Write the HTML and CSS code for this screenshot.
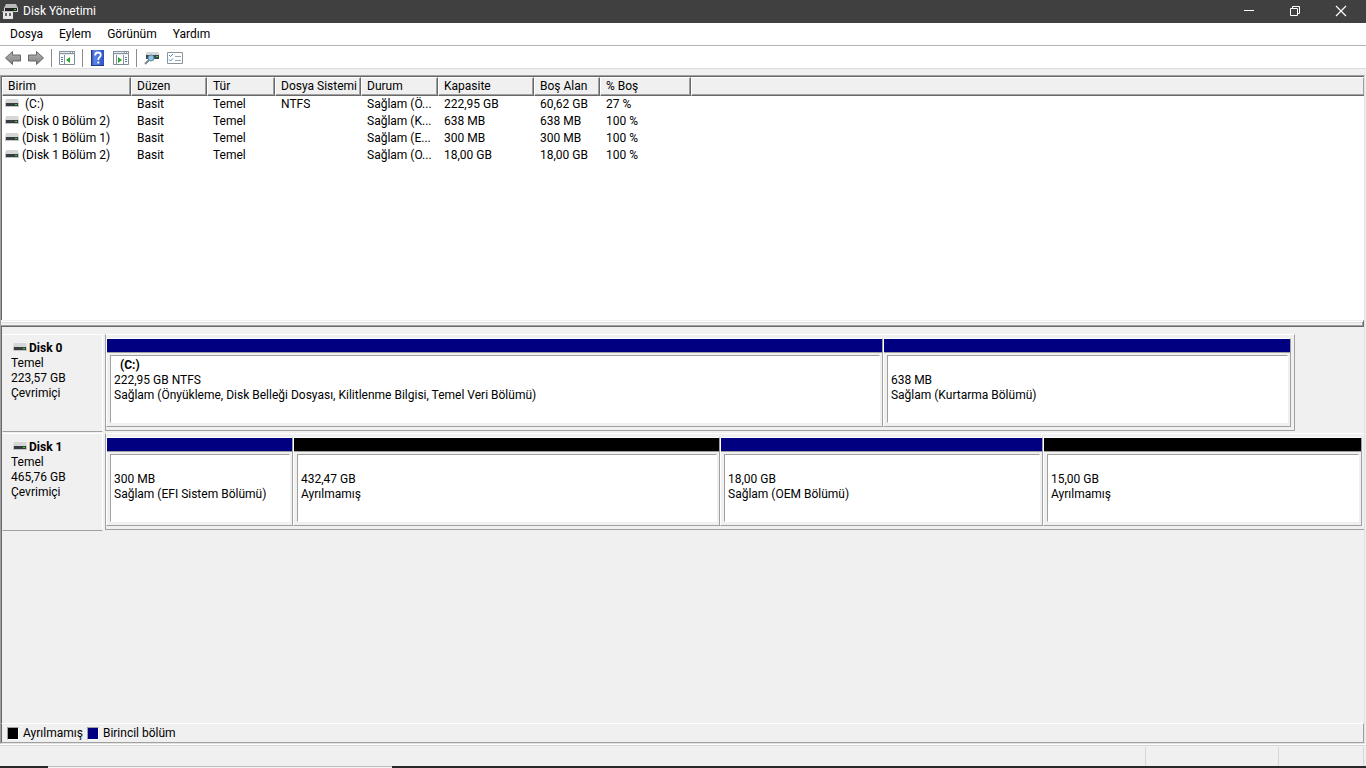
FILE: index.html
```
<!DOCTYPE html>
<html lang="tr">
<head>
<meta charset="utf-8">
<title>Disk Yönetimi</title>
<link rel="stylesheet" href="styles.css">
</head>
<body>
<svg class="defs" aria-hidden="true">
  <defs>
    <linearGradient id="arrowFill" x1="0" y1="0" x2="0" y2="1"><stop offset="0" stop-color="#b4b4b4"/><stop offset="1" stop-color="#808080"/></linearGradient>
    <linearGradient id="helpFill" x1="0" y1="0" x2="1" y2="0"><stop offset="0" stop-color="#24429c"/><stop offset=".25" stop-color="#5b84ea"/><stop offset="1" stop-color="#2c52c4"/></linearGradient>
    <symbol id="drive" viewBox="0 0 14 8">
      <path d="M1 0h12l1 4H0z" fill="#d4d6d8"/>
      <path d="M0 4h14v4H0z" fill="#c3c6ca"/>
      <path d="M1 4h12v3H1z" fill="#383c3e"/>
      <path d="M10 5h2v1h-2z" fill="#2be02b"/>
    </symbol>
  </defs>
</svg>
<div class="window">
  <header class="titlebar">
    <svg class="app-icon" width="16" height="16" viewBox="0 0 16 16">
      <path d="M4 0h10l2 4H2z" fill="#b9bbbd"/><path d="M2 4h14v4H2z" fill="#d4d6d8"/><path d="M3 4h12v3H3z" fill="#222"/><path d="M12 5h2v1h-2z" fill="#35df35"/>
      <path d="M0 7h12v9H0z" fill="#404040"/><path d="M1 8h10v7H1z" fill="#e6e6e6"/><path d="M3 9h2v3H3zM7 9h2v3H7z" fill="#666"/><path d="M0 7h12v1H0z" fill="#c0c0c0"/>
    </svg>
    <h1 class="title">Disk Yönetimi</h1>
    <button class="caption" aria-label="Simge durumuna küçült"><svg width="12" height="12" viewBox="0 0 12 12"><path d="M1 5.500h10" stroke="#fff" fill="none"/></svg></button>
    <button class="caption" aria-label="Önceki boyut"><svg width="12" height="12" viewBox="0 0 12 12"><path d="M1.500 3.500h7v7h-7zM3.500 3.500v-2h7v7h-2" stroke="#fff" fill="none"/></svg></button>
    <button class="caption" aria-label="Kapat"><svg width="12" height="12" viewBox="0 0 12 12"><path d="M1 1l10 10M11 1L1 11" stroke="#fff" stroke-width="1.200" fill="none"/></svg></button>
  </header>
  <nav class="menubar">
    <button>Dosya</button><button>Eylem</button><button>Görünüm</button><button>Yardım</button>
  </nav>
  <div class="toolbar" role="toolbar">
    <button aria-label="Geri"><svg width="16" height="16" viewBox="0 0 16 16"><path d="M.5 8L7.500 1.500V5h8v6h-8v3.500z" fill="url(#arrowFill)" stroke="#666"/></svg></button>
    <button aria-label="İleri"><svg width="16" height="16" viewBox="0 0 16 16"><path d="M15.500 8L8.500 1.500V5h-8v6h8v3.500z" fill="url(#arrowFill)" stroke="#666"/></svg></button>
    <span class="separator"></span>
    <button aria-label="Konsol ağacını göster"><svg width="16" height="14" viewBox="0 0 16 14"><path d="M.5.5h15v13H.5z" fill="#fff" stroke="#818b96"/><path d="M0 0h16v4H0z" fill="#8a94a0"/><path d="M1 1.500h10M1 3.500h14" stroke="#e4e9ee"/><path d="M12 1h1v1h-1zM14 1h1v1h-1z" fill="#fff"/><path d="M5.500 4v10" stroke="#8a94a0"/><path d="M2 6.500h2M2 8.500h2M2 10.500h2" stroke="#4e78a8"/><path d="M11 6v6L7 9z" fill="#2fa32f"/></svg></button>
    <span class="separator"></span>
    <button aria-label="Yardım konuları"><svg width="16" height="16" viewBox="0 0 16 16"><path d="M1 0h13v16H1z" fill="url(#helpFill)"/><path d="M1 0h1v16H1zM2 15h12v1H2z" fill="#213a86"/><path d="M5.200 5.400Q5.200 2.500 8 2.500T10.800 5Q10.800 6.400 9.200 7.400Q8.300 8 8.300 10" fill="none" stroke="#fff" stroke-width="1.800"/><path d="M7.300 11.500h2v2h-2z" fill="#fff"/></svg></button>
    <button aria-label="Eylem bölmesini göster"><svg width="16" height="14" viewBox="0 0 16 14"><path d="M.5.5h15v13H.5z" fill="#fff" stroke="#818b96"/><path d="M0 0h16v4H0z" fill="#8a94a0"/><path d="M1 1.500h10M1 3.500h14" stroke="#e4e9ee"/><path d="M12 1h1v1h-1zM14 1h1v1h-1z" fill="#fff"/><path d="M3.500 4v10M10.500 4v10" stroke="#8a94a0"/><path d="M12 6.500h2M12 8.500h2M12 10.500h2" stroke="#4e78a8"/><path d="M5 6v6l4-3z" fill="#2fa32f"/></svg></button>
    <span class="separator"></span>
    <button aria-label="Diskleri yeniden tara"><svg width="16" height="14" viewBox="0 0 16 14"><path d="M3 1h11l2 3H1z" fill="#d4d6d8"/><path d="M2 4h13v4H2z" fill="#3c4648"/><path d="M12 5h2v1h-2z" fill="#31dc31"/><path d="M1 13l4-4" stroke="#7d8790" stroke-width="2"/><circle cx="7" cy="7" r="3" fill="#8ec2e4" stroke="#5b86a5"/></svg></button>
    <button aria-label="Ayarlar"><svg width="16" height="12" viewBox="0 0 16 12"><path d="M.5.5h15v11H.5z" fill="#fff" stroke="#8b949c"/><path d="M2 3l1.500 1.500L6 2M2 7.500L3.500 9 6 6.500" stroke="#3987cd" fill="none"/><path d="M8 4.500h6M8 8.500h6" stroke="#9ba2a8"/></svg></button>
  </div>
  <main class="workspace">
    <section class="volumes">
      <table>
        <colgroup><col class="c-volume"><col class="c-layout"><col class="c-type"><col class="c-fs"><col class="c-status"><col class="c-capacity"><col class="c-free"><col class="c-percent"><col></colgroup>
        <thead><tr><th>Birim</th><th>Düzen</th><th>Tür</th><th>Dosya Sistemi</th><th>Durum</th><th>Kapasite</th><th>Boş Alan</th><th>% Boş</th><th></th></tr></thead>
        <tbody>
          <tr><td class="name"><svg class="drive"><use href="#drive"/></svg>&nbsp;(C:)</td><td>Basit</td><td>Temel</td><td>NTFS</td><td>Sağlam (Ö...</td><td>222,95 GB</td><td>60,62 GB</td><td>27 %</td><td></td></tr>
          <tr><td class="name"><svg class="drive"><use href="#drive"/></svg>(Disk 0 Bölüm 2)</td><td>Basit</td><td>Temel</td><td></td><td>Sağlam (K...</td><td>638 MB</td><td>638 MB</td><td>100 %</td><td></td></tr>
          <tr><td class="name"><svg class="drive"><use href="#drive"/></svg>(Disk 1 Bölüm 1)</td><td>Basit</td><td>Temel</td><td></td><td>Sağlam (E...</td><td>300 MB</td><td>300 MB</td><td>100 %</td><td></td></tr>
          <tr><td class="name"><svg class="drive"><use href="#drive"/></svg>(Disk 1 Bölüm 2)</td><td>Basit</td><td>Temel</td><td></td><td>Sağlam (O...</td><td>18,00 GB</td><td>18,00 GB</td><td>100 %</td><td></td></tr>
        </tbody>
      </table>
    </section>
    <div class="splitter" role="separator"></div>
    <section class="disks">
      <article class="disk">
        <div class="disk-label"><h2><svg class="drive"><use href="#drive"/></svg>Disk 0</h2><p>Temel</p><p>223,57 GB</p><p>Çevrimiçi</p></div>
        <div class="graph graph-short">
          <div class="partition primary" style="flex-grow:775"><div class="bar"></div><div class="info"><p class="letter">(C:)</p><p>222,95 GB NTFS</p><p>Sağlam (Önyükleme, Disk Belleği Dosyası, Kilitlenme Bilgisi, Temel Veri Bölümü)</p></div></div>
          <div class="partition primary" style="flex-grow:406"><div class="bar"></div><div class="info"><p class="letter"></p><p>638 MB</p><p>Sağlam (Kurtarma Bölümü)</p></div></div>
        </div>
      </article>
      <article class="disk">
        <div class="disk-label"><h2><svg class="drive"><use href="#drive"/></svg>Disk 1</h2><p>Temel</p><p>465,76 GB</p><p>Çevrimiçi</p></div>
        <div class="graph">
          <div class="partition primary" style="flex-grow:185"><div class="bar"></div><div class="info"><p class="letter"></p><p>300 MB</p><p>Sağlam (EFI Sistem Bölümü)</p></div></div>
          <div class="partition" style="flex-grow:425"><div class="bar"></div><div class="info"><p class="letter"></p><p>432,47 GB</p><p>Ayrılmamış</p></div></div>
          <div class="partition primary" style="flex-grow:321"><div class="bar"></div><div class="info"><p class="letter"></p><p>18,00 GB</p><p>Sağlam (OEM Bölümü)</p></div></div>
          <div class="partition" style="flex-grow:317"><div class="bar"></div><div class="info"><p class="letter"></p><p>15,00 GB</p><p>Ayrılmamış</p></div></div>
        </div>
      </article>
    </section>
    <div class="legend"><span class="swatch"></span><span class="key">Ayrılmamış</span><span class="swatch swatch-primary"></span><span class="key">Birincil bölüm</span></div>
  </main>
  <footer class="statusbar"><span class="pane-main"></span><span class="pane-mid"></span><span class="pane-end"></span></footer>
  <div class="edge"><span class="edge-light"></span></div>
</div>
</body>
</html>
```
FILE: styles.css
```
* { box-sizing: border-box; }
body {
  margin: 0;
  background: #f0f0f0;
  color: #000;
  font: 12px/15px Roboto, "Open Sans", sans-serif;
}
h1, h2, p { margin: 0; font-size: inherit; }
button { margin: 0; padding: 0; border: 0; background: none; color: inherit; font: inherit; }
svg { display: block; flex: none; }
.defs { position: absolute; width: 0; height: 0; }
.window { display: flex; flex-direction: column; height: 100vh; overflow: hidden; }

.titlebar { display: flex; align-items: center; height: 23px; padding: 0 2px; background: #404040; color: #fff; }
.title { flex: 1; padding-left: 5px; font-weight: normal; }
.caption { display: grid; place-items: center; width: 46px; height: 23px; padding-bottom: 2px; }

.menubar { display: flex; gap: 16px; height: 23px; padding: 0 10px; background: #fff; border-bottom: 1px solid #b4b4b4; }

.toolbar { display: flex; align-items: center; gap: 7px; height: 23px; padding: 2px 5px 0; background: #fff; border-bottom: 1px solid #dcdcdc; }
.separator { width: 1px; height: 18px; background: #8c8c8c; }

.workspace {
  display: flex; flex: 1; flex-direction: column; min-height: 0;
  margin: 6px 1px 0 0;
  border: 1px solid; border-color: #a0a0a0 #e3e3e3 #e3e3e3 #a0a0a0;
}
.volumes, .disks, .legend { border-left: 1px solid #696969; }
.volumes { height: 244px; flex: none; background: #fff; border-top: 1px solid #696969; overflow: hidden; }
table { width: 100%; table-layout: fixed; border-spacing: 0; }
.c-volume { width: 129px; }
.c-layout { width: 76px; }
.c-type { width: 68px; }
.c-fs { width: 86px; }
.c-status { width: 77px; }
.c-capacity { width: 96px; }
.c-free { width: 66px; }
.c-percent { width: 91px; }
th, td { padding: 0 0 0 6px; text-align: left; font-weight: normal; white-space: nowrap; }
th {
  height: 19px; padding-left: 5px; background: #f0f0f0;
  border: 1px solid; border-color: #fff #696969 #696969 #fff;
  box-shadow: inset -1px -1px #a0a0a0;
}
th:last-child { border-right: 0; }
td { height: 17px; }
.drive { display: inline-block; width: 14px; height: 8px; vertical-align: 1px; }
.name { padding-left: 3px; }
.name .drive { margin-right: 3px; }

.splitter {
  flex: none; height: 7px; background: #f0f0f0;
  border-top: 1px solid #f0f0f0; border-bottom: 1px solid #696969; border-right: 1px solid #696969;
  box-shadow: inset 0 1px #fff, inset -1px -1px #a0a0a0, inset 0 2px #dcdcdc;
}
.disks { display: flex; flex: 1; flex-direction: column; gap: 1px; min-height: 0; padding-top: 7px; }
.disk { display: flex; gap: 2px; }
.disk-label { width: 101px; height: 98px; padding: 6px 8px; border: 1px solid; border-color: #fff #fff #a0a0a0 #f0f0f0; }
.disk-label h2 { font-weight: bold; }
.disk-label .drive { margin: 0 2px; }
.graph {
  display: flex; flex: 1; height: 97px; padding: 3px 2px 3px 0;
  border: 1px solid; border-color: #fff #a0a0a0 #a0a0a0 #a0a0a0; border-right: 0;
}
.graph-short { flex: none; width: calc(95% - 104px); padding-right: 3px; border-right: 1px solid #a0a0a0; }
.partition {
  display: flex; flex-direction: column; flex-basis: 0; min-width: 0;
  border: 1px solid; border-color: #fff #a0a0a0 #a0a0a0 #fff;
}
.bar { flex: none; height: 14px; background: #000; border-bottom: 1px solid #a0a0a0; }
.primary .bar { background: #000080; }
.info {
  flex: 1; margin: 2px 2px 3px 3px; padding: 2px 3px; background: #fff; overflow: hidden; white-space: nowrap;
  border: 1px solid; border-color: #a0a0a0 #fff #fff #a0a0a0;
}
.letter { height: 15px; padding-left: 6px; font-weight: bold; }

.legend { display: flex; align-items: center; height: 20px; padding-left: 5px; border-top: 1px solid #fff; border-right: 1px solid #a0a0a0; border-bottom: 1px solid #a0a0a0; }
.swatch { width: 12px; height: 13px; background: #000; border: 1px solid; border-color: #a0a0a0 #fff #fff #a0a0a0; }
.swatch-primary { background: #000080; }
.key { padding: 0 4px; }

.statusbar { display: flex; height: 22px; padding: 2px 2px 0 0; border-top: 1px solid #fff; box-shadow: inset 0 1px #d7d7d7; }
.statusbar span { border-right: 1px solid #d7d7d7; }
.pane-main { flex: 1; }
.pane-mid { width: 133px; }
.pane-end { width: 85px; }
.edge { height: 2px; padding-left: 48px; background: #2b2829; }
.edge-light { display: block; width: 344px; height: 2px; background: #f4f4f4; border-top: 1px solid #bdbdbd; }
```
